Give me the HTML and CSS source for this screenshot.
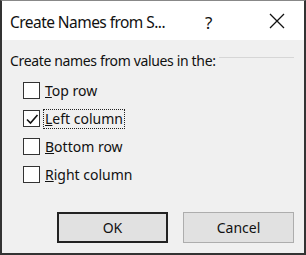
FILE: index.html
```html
<!DOCTYPE html>
<html>
<head>
<link rel="stylesheet" href="styles.css">
</head>
<body>
<div class="dialog">
  <div class="titlebar">
    <span class="title">Create Names from S...</span>
    <span class="help">?</span>
    <span class="close">
      <svg width="16" height="16" viewBox="0 0 16 16"><path d="M1 1L15 15M15 1L1 15" stroke="#111" stroke-width="1.3" fill="none"/></svg>
    </span>
  </div>
  <div class="body">
    <div class="group-head">
      <span>Create names from values in the:</span>
      <span class="rule"></span>
    </div>
    <div class="options">
      <label class="opt"><span class="box"></span><span class="lbl"><u>T</u>op row</span></label>
      <label class="opt"><span class="box"><svg width="14" height="14" viewBox="0 0 14 14"><path d="M2 7.5L5.5 11L12.5 3" stroke="#111" stroke-width="1.6" fill="none"/></svg></span><span class="lbl focus"><u>L</u>eft column</span></label>
      <label class="opt"><span class="box"></span><span class="lbl"><u>B</u>ottom row</span></label>
      <label class="opt"><span class="box"></span><span class="lbl"><u>R</u>ight column</span></label>
    </div>
    <div class="buttons">
      <button class="btn default">OK</button>
      <button class="btn">Cancel</button>
    </div>
  </div>
</div>
</body>
</html>
```
FILE: styles.css
```css
html, body {
  margin: 0;
  padding: 0;
  background: #f0f0f0;
}
.dialog {
  width: 306px;
  height: 255px;
  box-sizing: border-box;
  border: 2px solid #333;
  border-top: 1px solid #888;
  font-family: "Noto Sans", "Open Sans", sans-serif;
  color: #111;
  display: flex;
  flex-direction: column;
  background: #f0f0f0;
}
.titlebar {
  height: 39px;
  background: #fff;
  display: flex;
  align-items: center;
  padding-left: 8px;
  padding-top: 3px;
  box-sizing: border-box;
  font-size: 15.5px;
}
.title {
  flex: 1;
  letter-spacing: -0.55px;
}
.help {
  width: 20px;
  font-size: 17px;
  margin-right: 44px;
}
.close {
  display: flex;
  margin-right: 19px;
  margin-top: -3px;
}
.body {
  flex: 1;
  padding: 9px 10px 0 8px;
  font-size: 14px;
}
.group-head {
  display: flex;
  align-items: center;
  height: 22px;
  letter-spacing: -0.35px;
}
.rule {
  flex: 1;
  height: 1px;
  background: #d6d6d6;
  margin-left: 3px;
  margin-top: -6px;
}
.options {
  display: flex;
  flex-direction: column;
  gap: 11px;
  padding-left: 13px;
  margin-top: 11px;
}
.opt {
  display: flex;
  align-items: center;
  gap: 3px;
  height: 17px;
}
.box {
  width: 15px;
  height: 15px;
  border: 1px solid #333;
  background: #fff;
  display: flex;
  align-items: center;
  justify-content: center;
}
.lbl {
  padding: 0 1px;
  line-height: 18px;
  border: 1px solid transparent;
}
.lbl.focus {
  border: 1px dotted #222;
}
.buttons {
  display: flex;
  justify-content: flex-end;
  gap: 15px;
  margin-top: 29px;
}
.btn {
  width: 111px;
  height: 31px;
  background: #e1e1e1;
  border: 1px solid #adadad;
  font-family: "Noto Sans", "Open Sans", sans-serif;
  font-size: 14px;
  color: #111;
  padding: 0;
}
.btn.default {
  border: 2px solid #222;
}
```
